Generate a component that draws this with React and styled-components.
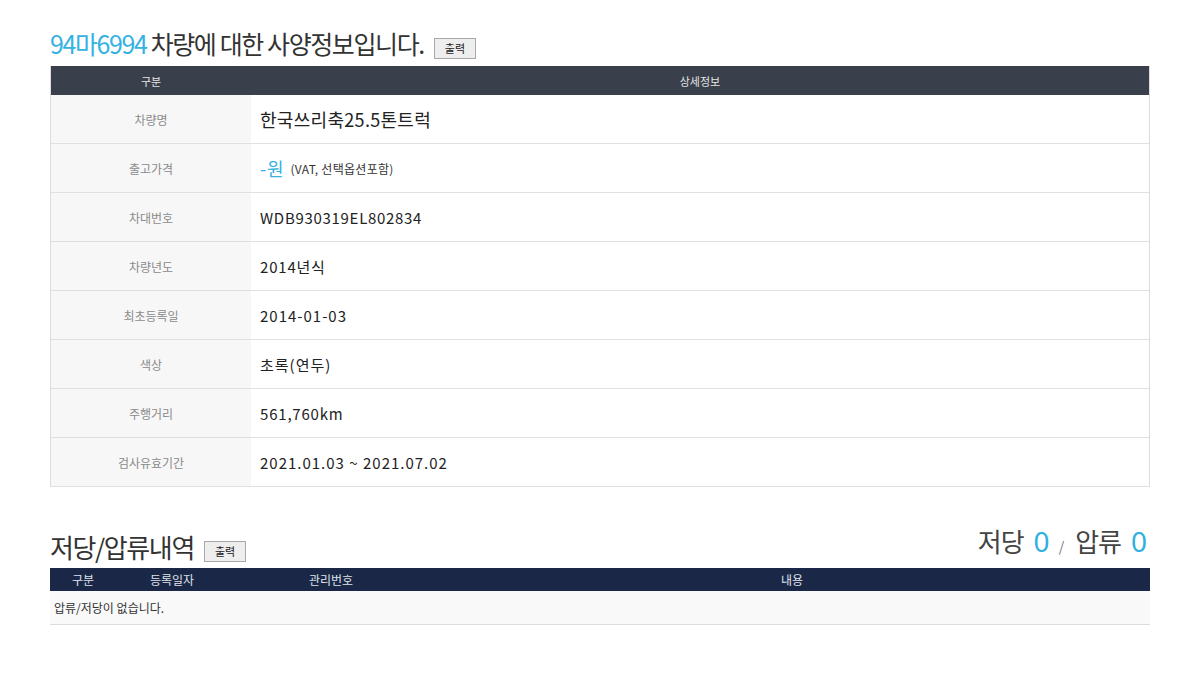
import React from "react";
import styled, { createGlobalStyle } from "styled-components";

const GlobalStyle = createGlobalStyle`
  body {
    margin: 0;
    background: #fff;
    font-family: "Noto Sans CJK KR", "Noto Sans", sans-serif;
    color: #333;
  }
`;

const Page = styled.div`
  width: 1100px;
  padding: 26px 0 0 50px;
`;

const TitleRow = styled.div`
  display: flex;
  align-items: flex-end;
  justify-content: space-between;
  height: ${props => props.height || 40}px;
`;

const Title = styled.h2`
  margin: 0;
  display: flex;
  align-items: flex-end;
  font-size: ${props => props.size || 25}px;
  font-weight: 400;
  letter-spacing: -1.4px;
  color: #333;
  line-height: 1;
`;

const Accent = styled.span`
  color: #35b2e2;
`;

const PrintButton = styled.button`
  margin-left: 10px;
  margin-bottom: ${props => props.bottom || 0}px;
  height: 21px;
  padding: 0 10px;
  border: 1px solid #a9a9a9;
  background: #eeeeee;
  font-family: "Noto Sans CJK KR", sans-serif;
  font-size: 11px;
  color: #222;
  letter-spacing: 0;
  line-height: 19px;
`;

const SpecTable = styled.div`
  margin-top: 10px;
  border-left: 1px solid #ddd;
  border-right: 1px solid #ddd;
`;

const SpecHead = styled.div`
  display: grid;
  grid-template-columns: 200px 1fr;
  height: 29px;
  background: #3a3f4c;
  color: #e6e6e6;
  font-size: 11px;
  align-items: center;
  text-align: center;
`;

const SpecRow = styled.div`
  display: grid;
  grid-template-columns: 200px 1fr;
  height: 49px;
  border-bottom: 1px solid #e0e0e0;
  box-sizing: border-box;
`;

const Label = styled.div`
  background: #f7f7f7;
  display: flex;
  align-items: center;
  justify-content: center;
  font-size: 12px;
  color: #8a8a8a;
`;

const Value = styled.div`
  display: flex;
  align-items: center;
  padding-left: 9px;
  font-size: ${props => props.size || 15}px;
  color: #222;
  letter-spacing: ${props => props.spacing ?? 0.8}px;
`;

const Price = styled.span`
  color: #35b2e2;
  font-size: 18px;
  margin-right: 6px;
`;

const Note = styled.span`
  font-size: 12px;
  color: #333;
  letter-spacing: 0.3px;
`;

const Section = styled.div`
  margin-top: 33px;
`;

const Counts = styled.div`
  display: flex;
  align-items: baseline;
  font-size: 26px;
  letter-spacing: -1px;
  color: #444;
  padding-right: 4px;
`;

const CountNum = styled.span`
  color: #2fb0e0;
  font-size: 28px;
  margin-left: 10px;
  font-family: "Noto Sans", sans-serif;
`;

const Slash = styled.span`
  font-size: 14px;
  color: #777;
  margin: 0 12px 0 10px;
`;

const LienHead = styled.div`
  margin-top: 8px;
  display: grid;
  grid-template-columns: 66px 112px 206px 1fr;
  height: 23px;
  background: #1b2746;
  color: #dfe3ec;
  font-size: 12px;
  align-items: center;
  text-align: center;
`;

const EmptyRow = styled.div`
  height: 33px;
  background: #f9f9f9;
  border-bottom: 1px solid #ddd;
  display: flex;
  align-items: center;
  padding-left: 4px;
  font-size: 12px;
  color: #333;
`;

const specs = [
  ["출고가격", null, 0.8],
  ["차대번호", "WDB930319EL802834", 0.7],
  ["차량년도", "2014년식", 0.8],
  ["최초등록일", "2014-01-03", 1],
  ["색상", "초록(연두)", 1],
  ["주행거리", "561,760km", 0.8],
  ["검사유효기간", "2021.01.03 ~ 2021.07.02", 1],
];

export default function App() {
  return (
    <Page>
      <GlobalStyle />
      <TitleRow height={30}>
        <Title>
          <Accent>94마6994</Accent>&nbsp;차량에 대한 사양정보입니다.
          <PrintButton bottom={-3}>출력</PrintButton>
        </Title>
      </TitleRow>
      <SpecTable>
        <SpecHead>
          <div>구분</div>
          <div>상세정보</div>
        </SpecHead>
        <SpecRow>
          <Label>차량명</Label>
          <Value size={18} spacing={0.3}>한국쓰리축25.5톤트럭</Value>
        </SpecRow>
        {specs.map(([label, value, spacing]) => (
          <SpecRow key={label}>
            <Label>{label}</Label>
            {value === null ? (
              <Value>
                <Price>-원</Price>
                <Note>(VAT, 선택옵션포함)</Note>
              </Value>
            ) : (
              <Value spacing={spacing}>{value}</Value>
            )}
          </SpecRow>
        ))}
      </SpecTable>
      <Section>
        <TitleRow>
          <Title size={26}>
            저당/압류내역
            <PrintButton bottom={-2}>출력</PrintButton>
          </Title>
          <Counts>
            저당<CountNum>0</CountNum>
            <Slash>/</Slash>
            압류<CountNum>0</CountNum>
          </Counts>
        </TitleRow>
        <LienHead>
          <div>구분</div>
          <div>등록일자</div>
          <div>관리번호</div>
          <div>내용</div>
        </LienHead>
        <EmptyRow>압류/저당이 없습니다.</EmptyRow>
      </Section>
    </Page>
  );
}
